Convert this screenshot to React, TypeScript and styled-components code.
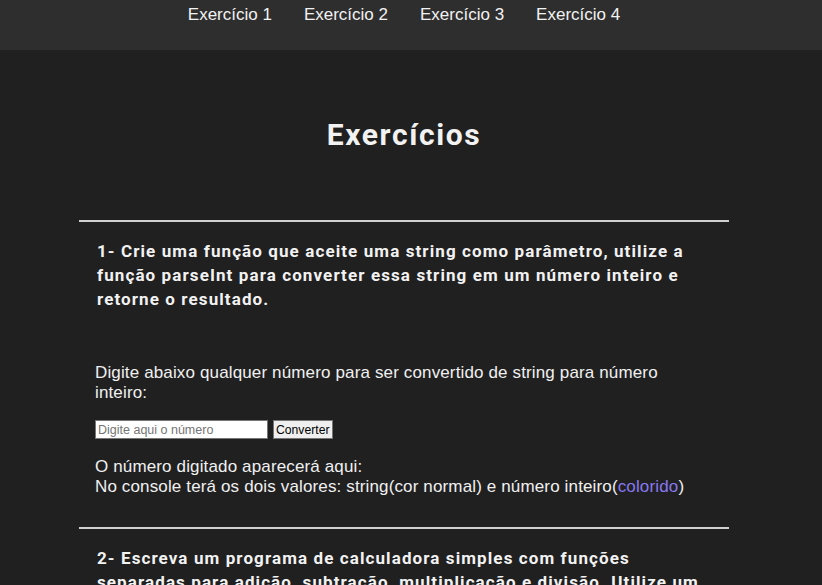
import React from "react";
import styled, { createGlobalStyle } from "styled-components";

const Global = createGlobalStyle`
  html, body { margin: 0; padding: 0; background: #202020; overflow: hidden; }
  body { font-family: "Liberation Sans", Arial, sans-serif; color: #f0f0f0; }
`;

const Nav = styled.nav`
  height: 50px;
  background: #2e2e2e;
  box-sizing: border-box;
  padding: 5px 14px 0 0;
  display: flex;
  justify-content: center;
  align-items: flex-start;
  gap: 32px;
`;

const NavLink = styled.a`
  color: #f2f2f2;
  font-size: 17px;
  line-height: 20px;
  text-decoration: none;
  font-family: "Liberation Sans", Arial, sans-serif;
`;

const Main = styled.main`
  box-sizing: border-box;
  padding-right: 14px;
  display: flex;
  flex-direction: column;
  align-items: center;
`;

const Title = styled.h1`
  margin: 0;
  padding-top: 67px;
  height: 170px;
  box-sizing: border-box;
  font-family: "Roboto", sans-serif;
  font-weight: 700;
  font-size: 30px;
  letter-spacing: 1.6px;
  line-height: 36px;
  color: #f2f2f2;
`;

const Section = styled.section`
  width: 650px;
  border-top: 2px solid #d0d0d0;
  padding: 17px 16px 30px;
  box-sizing: border-box;
`;

const Question = styled.h2`
  margin: 0 0 52px;
  padding-left: 2px;
  font-family: "Roboto", sans-serif;
  font-weight: 700;
  font-size: 17px;
  letter-spacing: 1.1px;
  line-height: 24px;
  color: #f2f2f2;
`;

const Text = styled.p`
  margin: 0;
  font-size: 17px;
  letter-spacing: 0.14px;
  line-height: 20px;
  color: #f0f0f0;
`;

const Row = styled.div`
  display: flex;
  gap: 5px;
  margin: 17px 0 18px;
`;

const Input = styled.input`
  width: 173px;
  height: 19px;
  box-sizing: border-box;
  border: 1px solid #767676;
  background: #fff;
  font-family: "Liberation Sans", Arial, sans-serif;
  font-size: 12.5px;
  padding: 0 2px;
  &::placeholder { color: #757575; }
`;

const Button = styled.button`
  height: 19px;
  box-sizing: border-box;
  border: 1px solid #767676;
  background: #efefef;
  font-family: "Liberation Sans", Arial, sans-serif;
  font-size: 12.2px;
  padding: 0 2px;
  color: #000;
`;

const Colored = styled.span`
  color: #8878f0;
`;

export default function App() {
  return (
    <>
      <Global />
      <Nav>
        <NavLink href="#">Exercício 1</NavLink>
        <NavLink href="#">Exercício 2</NavLink>
        <NavLink href="#">Exercício 3</NavLink>
        <NavLink href="#">Exercício 4</NavLink>
      </Nav>
      <Main>
        <Title>Exercícios</Title>
        <Section>
          <Question>
            1- Crie uma função que aceite uma string como parâmetro, utilize a função parseInt para converter essa string em um número inteiro e retorne o resultado.
          </Question>
          <Text>Digite abaixo qualquer número para ser convertido de string para número inteiro:</Text>
          <Row>
            <Input placeholder="Digite aqui o número" />
            <Button>Converter</Button>
          </Row>
          <Text>O número digitado aparecerá aqui:</Text>
          <Text>
            No console terá os dois valores: string(cor normal) e número inteiro(<Colored>colorido</Colored>)
          </Text>
        </Section>
        <Section>
          <Question>
            2- Escreva um programa de calculadora simples com funções separadas para adição, subtração, multiplicação e divisão. Utilize um
          </Question>
        </Section>
      </Main>
    </>
  );
}
